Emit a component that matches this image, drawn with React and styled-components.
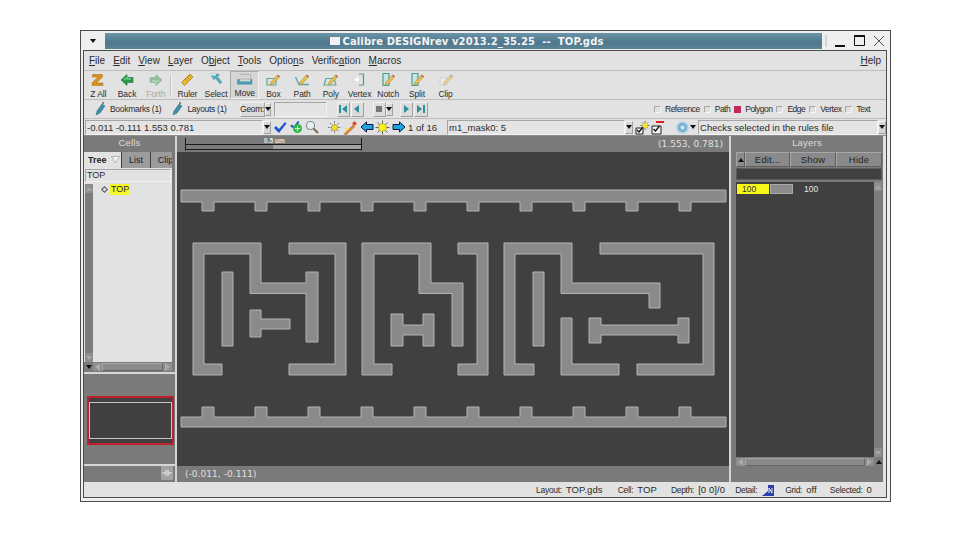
import styled, { createGlobalStyle } from 'styled-components'

const Global = createGlobalStyle`
  html, body { margin: 0; padding: 0; background: #fff; }
  * { box-sizing: border-box; }
`

const Page = styled.div`
  width: 960px;
  height: 540px;
  padding: 30px 0 0 80px;
  background: #fff;
  overflow: hidden;
  font-family: "Liberation Sans", Arial, sans-serif;
  color: #2a2a2a;
`
const Win = styled.div`
  width: 811px;
  height: 472px;
  border: 1px solid #4c4c4c;
  background: #efefef;
  display: flex;
  flex-direction: column;
`
const TitleBar = styled.div`
  height: 19px;
  display: flex;
  align-items: stretch;
`
const WinMenu = styled.div`
  width: 24px;
  display: flex;
  align-items: center;
  justify-content: center;
`
const TitleStrip = styled.div`
  flex: 1;
  margin: 2px 0 1px 0;
  padding-left: 6px;
  background: linear-gradient(#6b94a8, #4f788e 60%, #5c8497);
  color: #f4f4f4;
  font: bold 10px "DejaVu Sans", sans-serif;
  letter-spacing: 0.1px;
  white-space: pre;
  display: flex;
  align-items: center;
  justify-content: center;
  gap: 3px;
`
const WinControls = styled.div`
  width: 68px;
  display: flex;
  align-items: center;
  padding-left: 3px;
  gap: 5px;
`
const Frame = styled.div`
  flex: 1;
  margin: 0 3px 3px 2px;
  border: 1px solid #4c4c4c;
  background: #e2e2e2;
  display: flex;
  flex-direction: column;
  min-height: 0;
`
const MenuBar = styled.div`
  height: 20px;
  display: flex;
  align-items: center;
  padding: 0 5px;
  gap: 8px;
  font-size: 10px;
  border-bottom: 1px solid #bdbdbd;
`
const MenuHelp = styled.span`
  margin-left: auto;
`
const ToolBar = styled.div`
  height: 29px;
  display: flex;
  align-items: stretch;
  border-bottom: 1px solid #bdbdbd;
`
const Tool = styled.div`
  width: 28.7px;
  display: flex;
  flex-direction: column;
  align-items: center;
  justify-content: flex-end;
  font-size: 8.5px;
  letter-spacing: -0.1px;
  color: ${p => (p.$off ? '#a8a8a8' : '#2a2a2a')};
  ${p => p.$pressed && 'background: #d6d6d6; border: 1px solid; border-color: #a8a8a8 #f4f4f4 #f4f4f4 #a8a8a8;'}
  svg { margin-bottom: 2px; }
`
const VSep = styled.div`
  width: 2px;
  margin: ${p => p.$m || '4px 4px'};
  background: #c2c2c2;
  border-right: 1px solid #f4f4f4;
`
const Row = styled.div`
  height: ${p => p.$h}px;
  display: flex;
  align-items: center;
  border-bottom: 1px solid ${p => p.$line || '#bdbdbd'};
`
const SmallLabel = styled.span`
  font-size: 8.5px;
  letter-spacing: -0.3px;
  margin-left: ${p => p.$ml || 0}px;
  white-space: nowrap;
`
const PenBtn = styled.div`
  display: flex;
  align-items: center;
  margin-left: ${p => p.$ml}px;
`
const Raised = styled.div`
  height: 15px;
  width: ${p => p.$w}px;
  margin-left: ${p => p.$ml || 0}px;
  display: flex;
  align-items: center;
  justify-content: center;
  font-size: 8.5px;
  letter-spacing: -0.3px;
  background: #dcdcdc;
  border: 1px solid;
  border-color: #f4f4f4 #a0a0a0 #a0a0a0 #f4f4f4;
`
const Arrow = styled.i`
  display: block;
  width: 0;
  height: 0;
  border-left: ${p => (p.$dir === 'right' ? `5px solid ${p.$c}` : p.$dir === 'left' ? '0' : '3px solid transparent')};
  border-right: ${p => (p.$dir === 'left' ? `5px solid ${p.$c}` : p.$dir === 'right' ? '0' : '3px solid transparent')};
  border-top: ${p => (p.$dir === 'down' ? `4px solid ${p.$c}` : p.$dir === 'up' ? '0' : '4px solid transparent')};
  border-bottom: ${p => (p.$dir === 'up' ? `4px solid ${p.$c}` : p.$dir === 'down' ? '0' : '4px solid transparent')};
`
const Sunken = styled.div`
  height: ${p => p.$h || 15}px;
  width: ${p => p.$w}px;
  margin-left: ${p => p.$ml || 0}px;
  display: flex;
  align-items: center;
  padding-left: 1px;
  font-size: 9.5px;
  white-space: nowrap;
  overflow: hidden;
  background: #e4e4e4;
  border: 1px solid;
  border-color: #a6a6a6 #f4f4f4 #f4f4f4 #a6a6a6;
`
const Checks = styled.div`
  margin-left: auto;
  padding-right: 16px;
  display: flex;
  align-items: center;
  gap: 4px;
`
const Check = styled.div`
  display: flex;
  align-items: center;
  gap: 4px;
  font-size: 8.5px;
  letter-spacing: -0.5px;
`
const CheckBox = styled.i`
  display: block;
  width: 7px;
  height: 7px;
  background: ${p => (p.$on ? '#c0285a' : '#e0e0e0')};
  border: 1px solid;
  border-color: ${p => (p.$on ? '#c0285a' : '#a8a8a8 #f6f6f6 #f6f6f6 #a8a8a8')};
`
const DropBtn = styled.div`
  width: ${p => p.$w || 8}px;
  height: 13px;
  margin-left: ${p => p.$ml || 0}px;
  display: flex;
  align-items: center;
  justify-content: center;
  background: #d8d8d8;
  border: 1px solid;
  border-color: #f4f4f4 #a0a0a0 #a0a0a0 #f4f4f4;
`
const IconSlot = styled.div`
  width: ${p => p.$w || 16}px;
  margin-left: ${p => p.$ml || 0}px;
  display: flex;
  justify-content: center;
  align-items: center;
`
const CountText = styled.span`
  font-size: 9.5px;
  margin-left: ${p => p.$ml || 0}px;
  white-space: nowrap;
`
const Main = styled.div`
  height: 346px;
  margin-right: 3px;
  display: flex;
  background: #7a7a7a;
`
const Side = styled.div`
  width: ${p => p.$w}px;
  display: flex;
  flex-direction: column;
  flex-shrink: 0;
`
const PanelHead = styled.div`
  height: 16px;
  padding-bottom: 3px;
  display: flex;
  align-items: center;
  justify-content: center;
  font-size: 9.5px;
  letter-spacing: 0.2px;
  color: #dcdcdc;
`
const Tabs = styled.div`
  height: 16px;
  display: flex;
  align-items: stretch;
  width: 88px;
  overflow: hidden;
`
const Tab = styled.div`
  width: ${p => p.$w}px;
  flex-shrink: 0;
  display: flex;
  align-items: center;
  justify-content: ${p => (p.$active ? 'flex-start' : 'center')};
  gap: 4px;
  padding-left: ${p => (p.$active ? 4 : 0)}px;
  font-size: 9px;
  font-weight: ${p => (p.$active ? 'bold' : 'normal')};
  background: ${p => (p.$active ? '#e2e2e2' : '#9c9c9c')};
  color: #222;
  border-right: 1px solid #3e3e3e;
`
const TreeArea = styled.div`
  width: 88px;
  height: 194px;
  background: #e2e2e2;
  display: flex;
  flex-direction: column;
`
const Filter = styled.div`
  height: 13px;
  margin: 1px 1px 2px 1px;
  padding-left: 1px;
  font-size: 9px;
  line-height: 11px;
  border: 1px solid;
  border-color: #a8a8a8 #f2f2f2 #f2f2f2 #a8a8a8;
`
const TreeBody = styled.div`
  flex: 1;
  display: flex;
  padding-left: 1px;
`
const VScroll = styled.div`
  width: 8px;
  flex-shrink: 0;
  background: #7c7c7c;
  display: flex;
  flex-direction: column;
  justify-content: space-between;
  align-items: center;
`
const ScrollEnd = styled.div`
  width: 8px;
  height: 9px;
  display: flex;
  align-items: center;
  justify-content: center;
  background: #8e8e8e;
`
const TreeRow = styled.div`
  height: 11px;
  margin: 0;
  padding-left: 9px;
  display: flex;
  align-items: center;
  gap: 3px;
  font-size: 9px;
`
const Diamond = styled.i`
  display: block;
  width: 5px;
  height: 5px;
  border: 1px solid #555;
  transform: rotate(45deg);
`
const Marked = styled.span`
  background: #f6f628;
  padding: 0 1px;
  line-height: 11px;
`
const HScroll = styled.div`
  height: 10px;
  display: flex;
  align-items: center;
  width: ${p => p.$w}px;
  margin-left: ${p => p.$ml || 0}px;
`
const Corner = styled.div`
  width: 9px;
  height: 10px;
  flex-shrink: 0;
  display: flex;
  align-items: center;
  justify-content: center;
`
const Track = styled.div`
  flex: 1;
  height: 8px;
  background: #8a8a8a;
  border: 1px solid;
  border-color: #a6a6a6 #666 #666 #a6a6a6;
`
const ScrollCap = styled.div`
  width: 9px;
  height: 8px;
  flex-shrink: 0;
  display: flex;
  align-items: center;
  justify-content: center;
  background: #8e8e8e;
`
const Preview = styled.div`
  height: 94px;
  border-top: 2px solid #d6d6d6;
  border-bottom: 2px solid #d6d6d6;
  display: flex;
  align-items: center;
  padding-left: 3px;
`
const RedFrame = styled.div`
  width: 87px;
  height: 49px;
  margin-top: 2px;
  border: 2px solid #c0202e;
  background: #404040;
  display: flex;
  align-items: center;
  justify-content: center;
`
const PreviewBox = styled.div`
  width: 85px;
  height: 37px;
  border: 1px solid #c4c4c4;
  margin-top: 1px;
`
const SideFoot = styled.div`
  flex: 1;
  display: flex;
  justify-content: flex-end;
  align-items: flex-end;
  padding: 0 2px 2px 0;
`
const FootBtn = styled.div`
  width: 12px;
  height: 14px;
  background: #a2a2a2;
  display: flex;
  align-items: center;
  justify-content: center;
`
const Splitter = styled.div`
  width: 2px;
  flex-shrink: 0;
  background: #d4d4d4;
`
const CanvasCol = styled.div`
  width: 552px;
  flex-shrink: 0;
  display: flex;
  flex-direction: column;
`
const Strip = styled.div`
  position: relative;
  height: 16px;
  flex-shrink: 0;
  display: flex;
  align-items: center;
  justify-content: ${p => (p.$left ? 'flex-start' : 'flex-end')};
  padding: 0 6px 0 8px;
  font: 9px "DejaVu Sans", sans-serif;
  letter-spacing: 0.05px;
  color: #e0e0e0;
`
const Ruler = styled.svg`
  position: absolute;
  left: 8px;
  top: 2px;
`
const RulerLabel = styled.span`
  position: absolute;
  left: 87px;
  top: 1px;
  font: bold 6.5px "Liberation Sans", sans-serif;
  color: #e8e8e8;
`
const Canvas = styled.svg`
  display: block;
  width: 552px;
  height: 314px;
  background: #404040;
`
const LayerBtns = styled.div`
  height: 15px;
  margin: 0 1px 0 5px;
  display: flex;
`
const LayerBtn = styled.div`
  width: ${p => p.$w}px;
  display: flex;
  align-items: center;
  justify-content: center;
  font-size: 9.5px;
  letter-spacing: 0.2px;
  background: #8a8a8a;
  color: #222;
  border: 1px solid;
  border-color: #a8a8a8 #5e5e5e #5e5e5e #a8a8a8;
`
const LayerSearch = styled.div`
  height: 12px;
  margin: 1px 1px 2px 5px;
  background: #404040;
  border: 1px solid #5c5c5c;
`
const LayerBody = styled.div`
  height: 275px;
  margin-left: 5px;
  display: flex;
`
const LayerList = styled.div`
  width: 138px;
  background: #404040;
  padding: 2px 1px;
`
const LayerRow = styled.div`
  display: flex;
  align-items: center;
  height: 10px;
  font-size: 8.5px;
`
const LayerName = styled.div`
  width: 32px;
  height: 10px;
  padding-left: 5px;
  line-height: 10px;
  background: #f6f618;
  color: #333;
`
const LayerSwatch = styled.div`
  width: 23px;
  height: 10px;
  margin-left: 1px;
  background: #8c8c8c;
  border: 1px solid #a8a8a8;
`
const LayerNum = styled.span`
  margin-left: 11px;
  color: #e6e6e6;
`
const LayerScroll = styled.div`
  width: 9px;
  background: #7c7c7c;
  display: flex;
  flex-direction: column;
  justify-content: space-between;
`
const LayerFoot = styled.div`
  display: flex;
  margin-left: 5px;
`
const StatusBar = styled.div`
  height: 15px;
  display: flex;
  align-items: center;
  justify-content: flex-end;
  padding-right: 14px;
`
const StatusKey = styled.span`
  font-size: 8.5px;
  letter-spacing: -0.3px;
  margin-left: ${p => p.$ml || 0}px;
`
const StatusVal = styled.span`
  font-size: 9.5px;
  letter-spacing: 0.1px;
  margin-left: 4px;
  white-space: nowrap;
`

const ZIcon = () => (
  <svg width="14" height="14" viewBox="0 0 14 14"><path d="M1.500 1.500h10v2.500L5.500 10h6.500v2.500H1v-2.500L7 4H1.500z" fill="#d89020" stroke="#a86a10" strokeWidth=".5" /></svg>
)
const ArrowIcon = ({ dir, faded }) => (
  <svg width="14" height="14" viewBox="0 0 14 14" opacity={faded ? 0.45 : 1}>
    <g transform={dir === 'right' ? 'rotate(180 7 7)' : ''}>
      <path d="M1 7 7 1.500V4.500H13V9.500H7V12.500Z" fill="#2f9a46" stroke="#1c6a30" strokeWidth=".6" />
      <path d="M4 7 7 4.500V6H11" fill="none" stroke="#8fe8a0" />
    </g>
  </svg>
)
const RulerIcon = () => (
  <svg width="15" height="15" viewBox="0 0 15 15"><path d="M1.500 10.500 10 2l3 3-8.500 8.500z" fill="#e8b830" stroke="#a87818" strokeWidth=".7" /><path d="M5 7l1.500 1.500M7 5l1.500 1.500M9 3.500 10.500 5" stroke="#8a5c10" strokeWidth=".7" /></svg>
)
const SelectIcon = () => (
  <svg width="15" height="15" viewBox="0 0 15 15"><path d="M1 2h9v2H8l5 6-2 2-5-6-1 2z" fill="#4fb0b8" stroke="#6a8a90" strokeWidth=".4" /><path d="M1 2h6v1.500H1z" fill="#d8f0f0" /></svg>
)
const MoveIcon = () => (
  <svg width="17" height="15" viewBox="0 0 17 15"><path d="M4 2.500h11v5H4" fill="none" stroke="#8a8a8a" strokeWidth=".8" strokeDasharray="1.500 1" /><path d="M1 8h2.500v2.500H15V8h1.500v5H1z" fill="#4aa4b8" stroke="#2f7f94" strokeWidth=".5" /></svg>
)
const Pencil = () => (
  <>
    <path d="M6 10 12 3.500l2 2L8 12l-3 1z" fill="#e6c050" stroke="#a08028" strokeWidth=".5" />
    <path d="M12 3.500l1-1 2 2-1 1z" fill="#c85a40" />
  </>
)
const DrawIcon = ({ kind, faded }) => (
  <svg width="16" height="15" viewBox="0 0 16 15" opacity={faded ? 0.55 : 1}>
    {kind === 'box' && <path d="M2 6.500h9v6.500H2z" fill="none" stroke="#5ba8a0" strokeWidth="1.200" />}
    {kind === 'path' && <path d="M1.500 5 5 12.500h10" fill="none" stroke="#5ba8a0" strokeWidth="1.300" />}
    {kind === 'poly' && <path d="M3 6.500h8l2 6.500H1z" fill="none" stroke="#5ba8a0" strokeWidth="1.200" />}
    {kind === 'notch' && <path d="M3 1.500h6v12H3z" fill="#c8e4e0" stroke="#4e9c94" strokeWidth="1.200" />}
    {kind === 'clip' && <path d="M2 6h7v7H2z" fill="#f2f2f2" stroke="#aaa" strokeDasharray="1.500 1" />}
    <Pencil />
  </svg>
)
const VertexIcon = () => (
  <svg width="14" height="15" viewBox="0 0 14 15"><path d="M6 2h4.500v11H6" fill="none" stroke="#4aa098" strokeWidth="1.200" /><circle cx="4" cy="7.500" r="2" fill="#fff" /></svg>
)
const Tweezer = () => (
  <svg width="11" height="15" viewBox="0 0 11 15"><path d="M1 13 2 9l5-7 3 2-5 7z" fill="#3f8fa8" stroke="#2c6478" strokeWidth=".5" /><path d="M8 1h2M9 0v2" stroke="#333" strokeWidth=".6" transform="translate(-1 0)" /></svg>
)
const SkipIcon = ({ dir, bar }) => (
  <svg width="10" height="10" viewBox="0 0 10 10">
    <g transform={dir === 'left' ? 'rotate(180 5 5)' : ''} fill="#2f8f98">
      <path d={bar ? 'M1 1l5 4-5 4z' : 'M3 1l5 4-5 4z'} />
      {bar && <path d="M7 1h2v8H7z" />}
    </g>
  </svg>
)
const BlueCheck = () => (
  <svg width="14" height="13" viewBox="0 0 14 13"><path d="M1 7l2-2 3 3 6-7 1.500 1.500L6 12z" fill="#1e50d0" /></svg>
)
const GreenCheck = () => (
  <svg width="14" height="14" viewBox="0 0 14 14"><path d="M1 6l2-1.500 1.500 2L9 1l1.500 1L5 9z" fill="#1e50d0" /><circle cx="8.500" cy="8.500" r="4.500" fill="#32b848" /><path d="M6 8.500h5M8.500 6v5" stroke="#d8f8d8" strokeWidth="1" /></svg>
)
const Magnifier = () => (
  <svg width="14" height="14" viewBox="0 0 14 14"><circle cx="5.500" cy="5.500" r="4" fill="#e8f0f4" stroke="#7c8c94" strokeWidth="1.100" /><path d="M8.500 8.500 13 13" stroke="#7a6a50" strokeWidth="2" /></svg>
)
const BugSun = () => (
  <svg width="15" height="15" viewBox="0 0 15 15">
    <g stroke="#555" strokeWidth=".8"><path d="M7.500 1v13M1 7.500h13M3 3l9 9M12 3l-9 9" strokeDasharray="1.500 1" /></g>
    <circle cx="7.500" cy="7.500" r="3" fill="#f2e030" stroke="#8a7a10" strokeWidth=".5" />
  </svg>
)
const Wand = () => (
  <svg width="15" height="15" viewBox="0 0 15 15"><path d="M1 14 10 5l2 1.500L3 15z" fill="#e08030" stroke="#a05a20" strokeWidth=".4" /><circle cx="11.500" cy="3.500" r="2" fill="#e84830" /><path d="M2 8h4v2H2z" fill="#f0e060" /></svg>
)
const NavArrow = ({ dir }) => (
  <svg width="14" height="12" viewBox="0 0 14 12">
    <path transform={dir === 'right' ? 'rotate(180 7 6)' : ''} d="M1 6 6.500 1v2.500H13v5H6.500V11z" fill="#1aa4e0" stroke="#101040" strokeWidth="1" />
  </svg>
)
const Sun = () => (
  <svg width="15" height="15" viewBox="0 0 15 15"><g stroke="#444" strokeWidth=".8"><path d="M7.500 .5v14M.5 7.500h14M2.500 2.500l10 10M12.500 2.500l-10 10" /></g><circle cx="7.500" cy="7.500" r="4" fill="#f8f020" stroke="#a09010" strokeWidth=".5" /></svg>
)
const SunCheck = () => (
  <svg width="15" height="15" viewBox="0 0 15 15"><g stroke="#444" strokeWidth=".7"><path d="M10 1v9M5.500 5.500h9M7 2.500l6 6M13 2.500l-6 6" /></g><circle cx="10" cy="5.500" r="2.500" fill="#f4e820" /><path d="M1 8h7v6H1z" fill="#f4f4f4" stroke="#222" /><path d="M2 10l2 2 4-5" fill="none" stroke="#111" strokeWidth="1.300" /></svg>
)
const RedCheck = () => (
  <svg width="14" height="15" viewBox="0 0 14 15"><path d="M5 2h8" stroke="#e02020" strokeWidth="2" /><path d="M1 6h9v8H1z" fill="#f4f4f4" stroke="#222" /><path d="M2.500 9l2 2 4-5" fill="none" stroke="#111" strokeWidth="1.300" /></svg>
)
const Gear = () => (
  <svg width="15" height="15" viewBox="0 0 15 15"><circle cx="7.500" cy="7.500" r="5.500" fill="#7cb0d0" stroke="#b8d8e8" strokeWidth="2" strokeDasharray="2 1" /><circle cx="7.500" cy="7.500" r="2" fill="#d4e8f4" /></svg>
)
const DetailIcon = () => (
  <svg width="12" height="12" viewBox="0 0 12 12"><path d="M0 12 6 7V1h6v11z" fill="#2b3fa8" /><path d="M7 9V4l3 5V4" fill="none" stroke="#e8e8f8" strokeWidth="1" /></svg>
)

const shapes = [
  'M181 190H726V202H691V211H679V202H638V211H626V202H585V211H573V202H532V211H520V202H479V211H467V202H426V211H414V202H373V211H361V202H320V211H308V202H267V211H255V202H214V211H202V202H181Z',
  'M181 427H726V417H691V407H679V417H638V407H626V417H585V407H573V417H532V407H520V417H479V407H467V417H426V407H414V417H373V407H361V417H320V407H308V417H267V407H255V417H214V407H202V417H181Z',
  'M193 243H261V283H306V272H318V342H306V293.500H250V254H204V364H222V375H193Z',
  'M222 272H233V346H222Z',
  'M250 310H261V319H290V329H261V337H250Z',
  'M289 243H346V375H289V364H335V254H289Z',
  'M362 243H431V283H463V346H452V293.500H419V254H374V364H392V375H362Z',
  'M391 314H403V325H423V314H434V346H423V335H403V346H391Z',
  'M458 243H488V375H458V364H477V254H458Z',
  'M504 243H572V283H660V308H649V293.500H561V254H515V364H534V375H504Z',
  'M533 272H544V346H533Z',
  'M561 318H572V364H619V375H561Z',
  'M589 318H601V325H678V318H689V343H678V335H601V343H589Z',
  'M600 243H714V375H637V364H703V254H600Z',
]

const tools1 = [
  ['Z All', <ZIcon />],
  ['Back', <ArrowIcon dir="left" />],
  ['Forth', <ArrowIcon dir="right" faded />, true],
]
const tools2 = [
  ['Ruler', <RulerIcon />],
  ['Select', <SelectIcon />],
  ['Move', <MoveIcon />, false, true],
  ['Box', <DrawIcon kind="box" />],
  ['Path', <DrawIcon kind="path" />],
  ['Poly', <DrawIcon kind="poly" />],
  ['Vertex', <VertexIcon />],
  ['Notch', <DrawIcon kind="notch" />],
  ['Split', <DrawIcon kind="notch" />],
  ['Clip', <DrawIcon kind="clip" faded />],
]
const checks = [['Reference'], ['Path'], ['Polygon', true], ['Edge'], ['Vertex'], ['Text']]

function ToolItem({ item }) {
  return (
    <Tool $off={item[2]} $pressed={item[3]}>
      {item[1]}
      <span>{item[0]}</span>
    </Tool>
  )
}

export default function App() {
  return (
    <Page>
      <Global />
      <Win>
        <TitleBar>
          <WinMenu><Arrow $dir="down" $c="#111" /></WinMenu>
          <TitleStrip>
            <svg width="10" height="8" viewBox="0 0 10 8"><path d="M0 0h10v8H0z" fill="#f2f2f2" /></svg>
            <span>Calibre DESIGNrev v2013.2_35.25  --  TOP.gds</span>
          </TitleStrip>
          <WinControls>
            <svg width="3" height="12"><path d="M1 0v12" stroke="#bbb" /></svg>
            <svg width="15" height="14" viewBox="0 0 15 14"><path d="M2 12h10" stroke="#111" strokeWidth="2" /></svg>
            <svg width="14" height="14" viewBox="0 0 14 14"><path d="M1.500 1.500h10v10h-10z" fill="none" stroke="#111" /><path d="M1.500 2h10" stroke="#111" strokeWidth="2" /></svg>
            <svg width="14" height="14" viewBox="0 0 14 14"><path d="M2 2l10 10M12 2 2 12" stroke="#555" /></svg>
          </WinControls>
        </TitleBar>
        <Frame>
          <MenuBar>
            <span><u>F</u>ile</span>
            <span><u>E</u>dit</span>
            <span><u>V</u>iew</span>
            <span><u>L</u>ayer</span>
            <span>O<u>b</u>ject</span>
            <span><u>T</u>ools</span>
            <span>Optio<u>n</u>s</span>
            <span>Verific<u>a</u>tion</span>
            <span><u>M</u>acros</span>
            <MenuHelp><u>H</u>elp</MenuHelp>
          </MenuBar>
          <ToolBar>
            {tools1.map(t => <ToolItem key={t[0]} item={t} />)}
            <VSep $m="4px 1px 4px 0" />
            {tools2.map(t => <ToolItem key={t[0]} item={t} />)}
          </ToolBar>
          <Row $h={19}>
            <PenBtn $ml={11}><Tweezer /></PenBtn>
            <SmallLabel $ml={4}>Bookmarks (1)</SmallLabel>
            <PenBtn $ml={11}><Tweezer /></PenBtn>
            <SmallLabel $ml={4}>Layouts (1)</SmallLabel>
            <VSep $m="3px 4px" />
            <Raised $w={25} $ml={3}>Geom:</Raised>
            <DropBtn $w={6}><Arrow $dir="down" $c="#111" /></DropBtn>
            <Sunken $w={53} $ml={3} />
            <Raised $w={13} $ml={10}><SkipIcon dir="left" bar /></Raised>
            <Raised $w={13} $ml={1}><SkipIcon dir="left" /></Raised>
            <Raised $w={13} $ml={9}><svg width="6" height="6"><path d="M0 0h6v6H0z" fill="#777" /></svg></Raised>
            <DropBtn $w={7}><Arrow $dir="down" $c="#111" /></DropBtn>
            <Raised $w={13} $ml={7}><SkipIcon dir="right" /></Raised>
            <Raised $w={14} $ml={1}><SkipIcon dir="right" bar /></Raised>
            <Checks>
              {checks.map(c => (
                <Check key={c[0]}><CheckBox $on={c[1]} />{c[0]}</Check>
              ))}
            </Checks>
          </Row>
          <Row $h={17} $line="#8c8c8c">
            <Sunken $w={178} $ml={1}>-0.011 -0.111 1.553 0.781</Sunken>
            <DropBtn><Arrow $dir="down" $c="#111" /></DropBtn>
            <IconSlot $ml={1}><BlueCheck /></IconSlot>
            <IconSlot><GreenCheck /></IconSlot>
            <IconSlot><Magnifier /></IconSlot>
            <VSep $m="2px 2px" />
            <IconSlot $ml={1}><BugSun /></IconSlot>
            <IconSlot><Wand /></IconSlot>
            <IconSlot><NavArrow dir="left" /></IconSlot>
            <IconSlot><Sun /></IconSlot>
            <IconSlot><NavArrow dir="right" /></IconSlot>
            <CountText $ml={1}>1 of 16</CountText>
            <VSep $m="2px 3px 2px 5px" />
            <Sunken $w={178}>m1_mask0: 5</Sunken>
            <DropBtn><Arrow $dir="down" $c="#111" /></DropBtn>
            <IconSlot $ml={1}><SunCheck /></IconSlot>
            <IconSlot><RedCheck /></IconSlot>
            <VSep $m="2px 3px" />
            <IconSlot><Gear /></IconSlot>
            <Arrow $dir="down" $c="#111" />
            <Sunken $w={180} $ml={2}>Checks selected in the rules file</Sunken>
            <DropBtn><Arrow $dir="down" $c="#111" /></DropBtn>
          </Row>
          <Main>
            <Side $w={91}>
              <PanelHead>Cells</PanelHead>
              <Tabs>
                <Tab $active $w={38}>
                  Tree
                  <svg width="9" height="8" viewBox="0 0 9 8"><path d="M.5.500h8L4.500 7z" fill="#f4f4f4" stroke="#999" strokeWidth=".7" /></svg>
                </Tab>
                <Tab $w={29}>List</Tab>
                <Tab $w={30}>Clip</Tab>
              </Tabs>
              <TreeArea>
                <Filter>TOP</Filter>
                <TreeBody>
                  <VScroll>
                    <ScrollEnd><Arrow $dir="up" $c="#a8a8a8" /></ScrollEnd>
                    <ScrollEnd><Arrow $dir="down" $c="#a8a8a8" /></ScrollEnd>
                  </VScroll>
                  <TreeRow><Diamond /><Marked>TOP</Marked></TreeRow>
                </TreeBody>
              </TreeArea>
              <HScroll $w={88}>
                <Corner><Arrow $dir="down" $c="#111" /></Corner>
                <ScrollCap><Arrow $dir="left" $c="#aaa" /></ScrollCap>
                <Track />
                <ScrollCap><Arrow $dir="right" $c="#aaa" /></ScrollCap>
              </HScroll>
              <Preview>
                <RedFrame><PreviewBox /></RedFrame>
              </Preview>
              <SideFoot>
                <FootBtn>
                  <svg width="10" height="8" viewBox="0 0 10 8"><path d="M0 4h4M6 4h4M4 1v6M6 1v6" stroke="#eee" /></svg>
                </FootBtn>
              </SideFoot>
            </Side>
            <Splitter />
            <CanvasCol>
              <Strip>
                <Ruler width="178" height="13" viewBox="0 0 178 13">
                  <path d="M88 6.500h88v5H88z" fill="#a2a2a2" />
                  <path d="M.5 0v12.500M176.500 0v12.500M.5 6.500h176M.5 11.500h176" stroke="#1c1c1c" fill="none" />
                </Ruler>
                <RulerLabel>0.5 um</RulerLabel>
                (1.553, 0.781)
              </Strip>
              <Canvas viewBox="177 152 552 314">
                {shapes.map((d, i) => (
                  <path key={i} d={d} fill="#8a8a8a" stroke="#b4b4b4" strokeWidth="1" />
                ))}
              </Canvas>
              <Strip $left>(-0.011, -0.111)</Strip>
            </CanvasCol>
            <Splitter />
            <Side $w={152}>
              <PanelHead>Layers</PanelHead>
              <LayerBtns>
                <LayerBtn $w={9}><Arrow $dir="up" $c="#111" /></LayerBtn>
                <LayerBtn $w={45}>Edit...</LayerBtn>
                <LayerBtn $w={46}>Show</LayerBtn>
                <LayerBtn $w={46}>Hide</LayerBtn>
              </LayerBtns>
              <LayerSearch />
              <LayerBody>
                <LayerList>
                  <LayerRow>
                    <LayerName>100</LayerName>
                    <LayerSwatch />
                    <LayerNum>100</LayerNum>
                  </LayerRow>
                </LayerList>
                <LayerScroll>
                  <ScrollEnd><Arrow $dir="up" $c="#a8a8a8" /></ScrollEnd>
                  <ScrollEnd><Arrow $dir="down" $c="#a8a8a8" /></ScrollEnd>
                </LayerScroll>
              </LayerBody>
              <LayerFoot>
                <HScroll $w={138}>
                  <ScrollCap><Arrow $dir="left" $c="#aaa" /></ScrollCap>
                  <Track />
                  <ScrollCap><Arrow $dir="right" $c="#aaa" /></ScrollCap>
                </HScroll>
                <Corner><Arrow $dir="up" $c="#111" /></Corner>
              </LayerFoot>
            </Side>
          </Main>
          <StatusBar>
            <StatusKey>Layout:</StatusKey><StatusVal>TOP.gds</StatusVal>
            <StatusKey $ml={15}>Cell:</StatusKey><StatusVal>TOP</StatusVal>
            <StatusKey $ml={14}>Depth:</StatusKey><StatusVal>[0 0]/0</StatusVal>
            <StatusKey $ml={10}>Detail:</StatusKey>
            <IconSlot $w={12} $ml={5}><DetailIcon /></IconSlot>
            <StatusKey $ml={11}>Grid:</StatusKey><StatusVal>off</StatusVal>
            <StatusKey $ml={13}>Selected:</StatusKey><StatusVal>0</StatusVal>
          </StatusBar>
        </Frame>
      </Win>
    </Page>
  )
}
